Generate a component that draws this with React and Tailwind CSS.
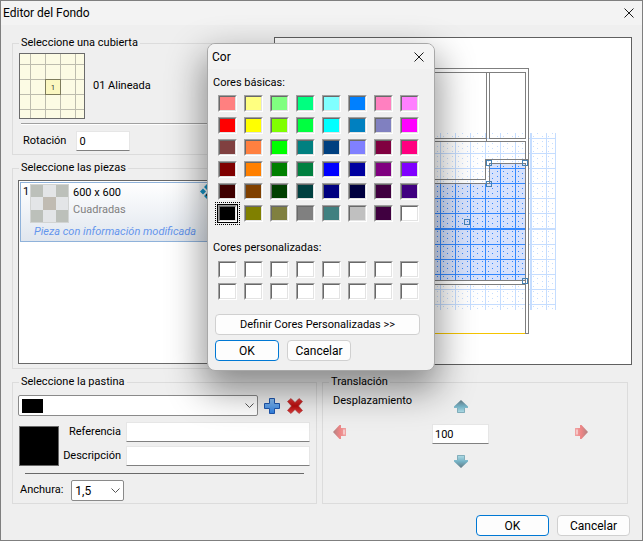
const basicColors = [
  ['#ff8080', '#ffff80', '#80ff80', '#00ff80', '#80ffff', '#0080ff', '#ff80c0', '#ff80ff'],
  ['#ff0000', '#ffff00', '#80ff00', '#00ff40', '#00ffff', '#0080c0', '#8080c0', '#ff00ff'],
  ['#804040', '#ff8040', '#00ff00', '#008080', '#004080', '#8080ff', '#800040', '#ff0080'],
  ['#800000', '#ff8000', '#008000', '#008040', '#0000ff', '#0000a0', '#800080', '#8000ff'],
  ['#400000', '#804000', '#004000', '#004040', '#000080', '#000040', '#400040', '#400080'],
  ['#000000', '#808000', '#808040', '#808080', '#408080', '#c0c0c0', '#400040', '#ffffff'],
]

const customColors = [Array(8).fill('#ffffff'), Array(8).fill('#ffffff')]

function Group({ title, className = '', children }) {
  return (
    <fieldset className={`min-w-0 border border-[#dcdcdc] px-[5px] ${className}`}>
      <legend className="ml-[1px] px-[2px] leading-4">{title}</legend>
      {children}
    </fieldset>
  )
}

function TextBox({ className = '', ...props }) {
  return (
    <input
      type="text"
      className={`min-w-0 border border-[#e6e6e6] border-b-[#808080] bg-white px-[2px] outline-none ${className}`}
      {...props}
    />
  )
}

function Button({ primary, className = 'text-[12px]', children }) {
  return (
    <button
      type="button"
      className={`h-[21px] rounded-[4px] border bg-[#fdfdfd] leading-[18px] ${
        primary ? 'border-[#0078d4]' : 'border-[#d0d0d0]'
      } ${className}`}
    >
      {children}
    </button>
  )
}

function CloseIcon() {
  return (
    <svg width="10" height="10" viewBox="0 0 10 10" stroke="#1a1a1a" fill="none">
      <path d="M0.5 0.5l9 9M9.5 0.5l-9 9" />
    </svg>
  )
}

function Chevron() {
  return (
    <svg
      className="pointer-events-none absolute right-[4px] top-[8px]"
      width="9"
      height="6"
      viewBox="0 0 9 6"
      stroke="#555"
      fill="none"
    >
      <path d="M0.5 0.5l4 4 4-4" />
    </svg>
  )
}

function Swatch({ color, selected }) {
  return (
    <button
      type="button"
      aria-label={color}
      className={`h-[17px] w-[19px] border border-t-[#a0a0a0] border-l-[#a0a0a0] border-r-white border-b-white ${
        selected ? 'outline outline-black' : ''
      }`}
    >
      <span
        className="block h-full w-full border border-t-[#696969] border-l-[#696969] border-r-[#e3e3e3] border-b-[#e3e3e3]"
        style={{ backgroundColor: color }}
      />
    </button>
  )
}

function SwatchGrid({ rows, selected }) {
  return (
    <div className="grid w-max grid-cols-8 gap-x-[7px] gap-y-[5px]">
      {rows.flat().map((color, i) =>
        i === selected ? (
          <div key={i} className="relative h-[17px]">
            <span className="absolute -inset-[3px] border border-dotted border-black" />
            <div className="relative flex">
              <Swatch color={color} selected />
            </div>
          </div>
        ) : (
          <Swatch key={i} color={color} />
        ),
      )}
    </div>
  )
}

function ColorDialog() {
  return (
    <div
      role="dialog"
      aria-label="Cor"
      className="absolute left-[206px] top-[42px] w-[228px] overflow-hidden rounded-[8px] border border-[#a8a8a8] bg-[#f0f0f0] pb-[9px] shadow-[0_16px_36px_4px_rgba(0,0,0,0.42)]"
    >
      <div className="flex h-[25px] items-center justify-between bg-[#f3f3f3] pl-[4px] pr-[10px] text-[12px]">
        <span>Cor</span>
        <button type="button" aria-label="Cerrar">
          <CloseIcon />
        </button>
      </div>
      <div className="px-[5px]">
        <p className="mt-[6px] leading-4">Cores básicas:</p>
        <div className="ml-[5px] mt-[4px]">
          <SwatchGrid rows={basicColors} selected={40} />
        </div>
        <p className="mt-[18px] leading-4">Cores personalizadas:</p>
        <div className="ml-[5px] mt-[5px]">
          <SwatchGrid rows={customColors} />
        </div>
      </div>
      <div className="flex flex-col gap-[5px] pl-[7px] pr-[14px] pt-[14px]">
        <Button className="w-full text-[11px]">Definir Cores Personalizadas &gt;&gt;</Button>
        <div className="flex gap-2">
          <Button primary className="w-16 text-[12px]">
            OK
          </Button>
          <Button className="w-16 text-[12px]">Cancelar</Button>
        </div>
      </div>
    </div>
  )
}

function TilingIcon() {
  return (
    <svg width="66" height="66" viewBox="0 0 66 66" shapeRendering="crispEdges">
      <rect x="0.5" y="0.5" width="65" height="65" fill="#fcfbe4" stroke="#6b6b6b" />
      <path
        d="M11.5 1v64M26.5 1v64M41.5 1v64M56.5 1v64M1 11.5h64M1 26.5h64M1 41.5h64M1 56.5h64"
        stroke="#bdbcae"
        fill="none"
      />
      <rect x="26.5" y="26.5" width="15" height="15" fill="#fbf7c0" stroke="#7d7b5c" />
      <text x="32" y="37" fontSize="7" fill="#222">
        1
      </text>
    </svg>
  )
}

function PieceThumb() {
  return (
    <svg width="39" height="39" viewBox="0 0 39 39">
      <rect width="39" height="39" fill="#d2d4d3" />
      <path d="M1 1h12v12H1zM26 1h12v12H26zM1 26h12v12H1zM26 26h12v12H26z" fill="#bcc0ba" />
      <path d="M13 1h13v12H13zM1 13h12v13H1zM26 13h12v13H26zM13 26h13v12H13z" fill="#e3e5e7" />
      <path d="M13 13h13v13H13z" fill="#c0bbb2" />
    </svg>
  )
}

function MoveIcon() {
  return (
    <svg width="16" height="16" viewBox="0 0 16 16">
      <rect width="16" height="16" fill="#f4f6f8" />
      <path
        d="M8 0l3 3-3 3-3-3zM4 4.500l3 3-3 3-3-3zM12 4.500l3 3-3 3-3-3zM8 9l3 3-3 3-3-3z"
        fill="#1492c4"
      />
      <path d="M7 10h9v2H7z" fill="#333" />
    </svg>
  )
}

function PlusIcon() {
  return (
    <svg width="16" height="16" viewBox="0 0 16 16">
      <defs>
        <linearGradient id="plus" x1="0" y1="0" x2="0" y2="1">
          <stop offset="0" stopColor="#8cc0f5" />
          <stop offset="1" stopColor="#2f7fe0" />
        </linearGradient>
      </defs>
      <path
        d="M5.500 0.500h5v5h5v5h-5v5h-5v-5h-5v-5h5z"
        fill="url(#plus)"
        stroke="#1f56ad"
      />
    </svg>
  )
}

function DeleteIcon() {
  return (
    <svg width="16" height="16" viewBox="0 0 16 16">
      <defs>
        <linearGradient id="del" x1="0" y1="0" x2="0" y2="1">
          <stop offset="0" stopColor="#df3a3a" />
          <stop offset="0.5" stopColor="#b80c0c" />
          <stop offset="1" stopColor="#e04040" />
        </linearGradient>
      </defs>
      <path
        d="M4 0.500L8 4.500l4-4 3.500 3L11.500 8l4 4.500-3.500 3-4-4-4 4-3.500-3 4-4.500-4-4.500z"
        fill="url(#del)"
        stroke="#a83030"
        strokeWidth="0.6"
      />
    </svg>
  )
}

function VerticalArrow({ down }) {
  return (
    <svg width="14" height="13" viewBox="0 0 14 13" className={down ? 'rotate-180' : ''}>
      <defs>
        <linearGradient id="teal" x1="0" y1="0" x2="0" y2="1">
          <stop offset="0" stopColor="#637a85" />
          <stop offset="0.5" stopColor="#75b2c5" />
          <stop offset="1" stopColor="#b5dfe8" />
        </linearGradient>
      </defs>
      <path d="M7 0l7 6.500V8h-3v5H3V8H0V6.500z" fill="url(#teal)" />
      <path d="M3.500 8v4.500h7V8" stroke="#83aebb" fill="none" />
    </svg>
  )
}

function HorizontalArrow({ right }) {
  return (
    <svg width="13" height="14" viewBox="0 0 13 14" className={right ? 'rotate-180' : ''}>
      <defs>
        <linearGradient id="rose">
          <stop offset="0" stopColor="#b08383" />
          <stop offset="0.5" stopColor="#ec8585" />
          <stop offset="1" stopColor="#f0a4a4" />
        </linearGradient>
      </defs>
      <path d="M0 7l6.500-7H8v3h5v8H8v3H6.500z" fill="url(#rose)" />
      <path d="M10 4.500h2v5h-2z" fill="#f5c8c8" />
    </svg>
  )
}

const gridLines =
  'M425.500 133v177M440.500 133v177M455.500 133v177M470.500 133v177M485.500 133v177M500.500 133v177M515.500 133v177M546.500 133v177M555.500 133v177M400 138.500h156M400 153.500h156M400 168.500h156M400 183.500h156M400 198.500h156M400 213.500h156M400 244.500h156M400 259.500h156M400 274.500h156M400 289.500h156M400 304.500h156'

function FloorPlan() {
  return (
    <svg
      className="block h-[326px] w-full"
      viewBox="275 38 356 326"
      preserveAspectRatio="xMinYMin"
      shapeRendering="crispEdges"
      fill="none"
    >
      <defs>
        <pattern id="dots" x="440" y="138" width="15" height="15" patternUnits="userSpaceOnUse">
          <path
            d="M3 3h1v1h-1zM7 5h1v1h-1zM12 3h1v1h-1zM3 8h1v1h-1zM7 10h1v1h-1zM12 8h1v1h-1zM3 13h1v1h-1zM12 13h1v1h-1z"
            fill="#3388ff"
          />
        </pattern>
        <clipPath id="room">
          <path d="M400 183h89v-20h36v117H400z" />
        </clipPath>
      </defs>

      <g opacity="0.28">
        <rect x="400" y="133" width="156" height="177" fill="url(#dots)" />
        <path d={gridLines} stroke="#3388ff" />
        <path d="M531 133v177M400 229h156" stroke="#3388ff" strokeWidth="2" />
      </g>

      <g clipPath="url(#room)">
        <rect x="400" y="133" width="156" height="177" fill="#d6e1fc" />
        <rect x="400" y="133" width="156" height="177" fill="url(#dots)" />
        <path d={gridLines} stroke="#3388ff" />
        <path d="M400 229h156" stroke="#3388ff" strokeWidth="2" />
      </g>

      <path d="M525.500 72v261M528.500 68v265" stroke="#fff" />
      <path d="M526 73h2v260h-2zM487 73h2v65h-2zM434 139h91v2h-91zM434 281h91v3h-91z" fill="#fff" />
      <path
        d="M400 68.500h128.500v265h-3v-170h-36v20H400M400 72.500h125.500v66M486.500 72v69M489.500 72v66M400 138.500h86M489 138.500h36M400 141.500h125.500v18M400 179.500h85.500v-20h43M400 280.500h125M400 284.500h125"
        stroke="#7f7f7f"
      />
      <path d="M400 333.500h125" stroke="#f5c400" />
      <path
        d="M486.500 160.500h5v5h-5zM522.500 160.500h5v5h-5zM486.500 181.500h5v5h-5zM464.500 219.500h5v5h-5zM522.500 278.500h5v5h-5z"
        stroke="#4682b4"
      />
    </svg>
  )
}

function DeckGroup() {
  return (
    <Group title="Seleccione una cubierta" className="pb-[3px]">
      <div className="mt-[2px] flex items-center gap-2 pl-px">
        <TilingIcon />
        <span>01 Alineada</span>
      </div>
      <div className="ml-[3px] mt-[4px] h-[2px] border-b border-white bg-[#a0a0a0]" />
      <div className="mt-[6px] flex items-center gap-[10px] pl-[5px]">
        <label htmlFor="rotation">Rotación</label>
        <TextBox id="rotation" defaultValue="0" className="h-5 w-[54px]" />
      </div>
    </Group>
  )
}

function PiecesGroup() {
  return (
    <Group title="Seleccione las piezas" className="flex-1 pb-[4px]">
      <ul className="mt-[4px] h-[184px] border border-[#696969] bg-white p-px">
        <li className="h-[60px] border border-[#8fb2da] bg-linear-to-b from-white to-[#e0e6ee] pt-px">
          <div className="flex">
            <span className="w-[9px] pl-[2px] leading-4">1</span>
            <PieceThumb />
            <div className="ml-[4px] leading-[17px]">
              <p>600 x 600</p>
              <p className="text-[#808080]">Cuadradas</p>
            </div>
            <div className="ml-auto mr-[42px]">
              <MoveIcon />
            </div>
          </div>
          <p className="pl-[13px] italic leading-[17px] text-[#6495ed]">
            Pieza con información modificada
          </p>
        </li>
      </ul>
    </Group>
  )
}

function GroutGroup() {
  return (
    <Group title="Seleccione la pastina" className="w-[305px] shrink-0">
      <div className="mt-[5px] flex items-center">
        <div className="relative w-60">
          <select
            aria-label="Pastina"
            className="block h-[21px] w-full appearance-none rounded-[2px] border border-[#8a8a8a] bg-white"
          >
            <option></option>
          </select>
          <span className="pointer-events-none absolute left-[4px] top-[4px] h-[14px] w-[21px] bg-black" />
          <Chevron />
        </div>
        <button type="button" aria-label="Agregar" className="ml-[6px]">
          <PlusIcon />
        </button>
        <button type="button" aria-label="Eliminar" className="ml-[7px]">
          <DeleteIcon />
        </button>
      </div>
      <div className="mt-[6px] flex pr-px">
        <div className="ml-px mt-[4px] h-10 w-10 shrink-0 border border-[#696969] bg-black" />
        <div className="ml-[2px] grid flex-1 grid-cols-[60px_1fr] items-center gap-x-[5px] gap-y-[3px]">
          <label htmlFor="reference" className="text-right">
            Referencia
          </label>
          <TextBox id="reference" className="h-5" />
          <label htmlFor="description" className="text-right">
            Descripción
          </label>
          <TextBox id="description" className="h-5" />
        </div>
      </div>
      <div className="ml-[7px] mr-[7px] mt-[7px] h-px bg-[#696969]" />
      <div className="mt-[6px] flex items-center gap-2 pl-[2px]">
        <label htmlFor="width">Anchura:</label>
        <div className="relative w-[53px]">
          <select
            id="width"
            className="block h-[21px] w-full appearance-none rounded-[2px] border border-[#8a8a8a] bg-white pl-[3px] text-[12px]"
          >
            <option>1,5</option>
          </select>
          <Chevron />
        </div>
      </div>
    </Group>
  )
}

function TranslationGroup() {
  return (
    <Group title="Translación" className="flex-1">
      <div className="grid grid-cols-[1fr_auto_1fr] pl-[5px] pr-[34px] pt-[3px]">
        <div className="flex flex-col items-start gap-4">
          <label htmlFor="offset" className="leading-4">
            Desplazamiento
          </label>
          <button type="button" aria-label="Izquierda">
            <HorizontalArrow />
          </button>
        </div>
        <div className="flex flex-col items-center pt-[7px]">
          <button type="button" aria-label="Arriba">
            <VerticalArrow />
          </button>
          <TextBox id="offset" defaultValue="100" className="my-[11px] h-5 w-[57px]" />
          <button type="button" aria-label="Abajo">
            <VerticalArrow down />
          </button>
        </div>
        <button type="button" aria-label="Derecha" className="mt-8 self-start justify-self-end">
          <HorizontalArrow right />
        </button>
      </div>
    </Group>
  )
}

export default function App() {
  return (
    <div className="relative flex min-h-screen flex-col overflow-hidden border border-[#7f7f7f] bg-[#efefef] font-['Roboto','Liberation_Sans',sans-serif] text-[11px] text-black [&_svg]:block">
      <header className="flex h-6 items-center justify-between bg-[#f3f3f3] pl-[2px] pr-[8px]">
        <h1 className="text-[12px]">Editor del Fondo</h1>
        <button type="button" aria-label="Cerrar">
          <CloseIcon />
        </button>
      </header>

      <main className="flex flex-1 flex-col pl-[11px] pr-[10px] pt-[10px]">
        <div className="flex gap-2">
          <div className="flex w-[254px] shrink-0 flex-col gap-[5px]">
            <DeckGroup />
            <PiecesGroup />
          </div>
          <div className="mt-[2px] min-w-0 flex-1 self-start overflow-hidden border border-[#606060] bg-white">
            <FloorPlan />
          </div>
        </div>

        <div className="mr-[4px] mt-[5px] flex h-[130px] gap-[5px]">
          <GroutGroup />
          <TranslationGroup />
        </div>

        <div className="mt-[11px] flex justify-end gap-2 pr-[2px]">
          <Button primary className="w-[73px] text-[12px]">
            OK
          </Button>
          <Button className="w-[73px] text-[12px]">Cancelar</Button>
        </div>
      </main>

      <ColorDialog />
    </div>
  )
}
